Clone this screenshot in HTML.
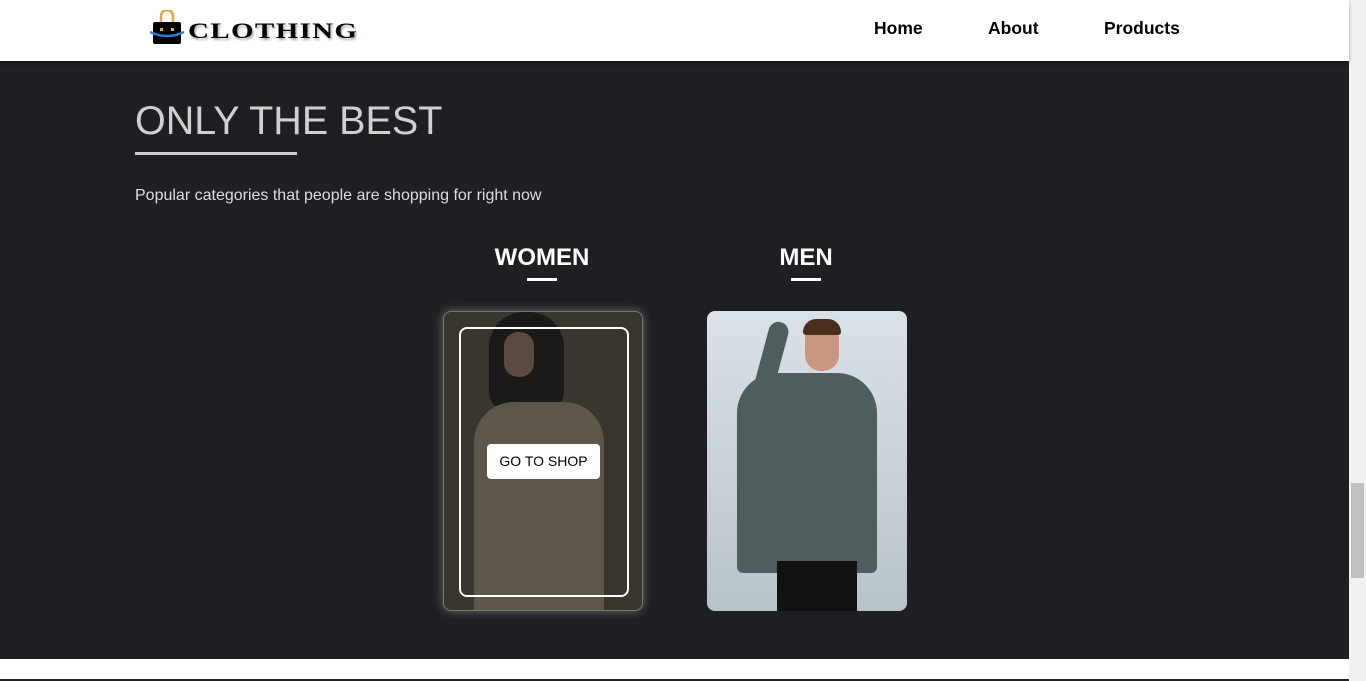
<!DOCTYPE html>
<html><head><meta charset="utf-8"><style>
*{margin:0;padding:0;box-sizing:border-box}
body{width:1366px;height:681px;overflow:hidden;background:#fff;font-family:"Liberation Sans",sans-serif;position:relative}
.nav{position:absolute;left:0;top:0;width:1349px;height:61px;background:#fff;box-shadow:0 2px 4px rgba(0,0,0,.3);z-index:2}
.nav a{position:absolute;top:18px;font-weight:bold;font-size:17.5px;color:#000;text-decoration:none}
.main{position:absolute;left:0;top:61px;width:1349px;height:598px;background:#1e1f23}
h1{position:absolute;left:135px;top:38px;font-weight:normal;font-size:39.5px;color:#d0d0d0}
.ul{position:absolute;left:135px;top:91px;width:162px;height:3px;background:#d0d0d0}
.sub{position:absolute;left:135px;top:126px;color:#ddd;font-size:16px}
.cat{position:absolute;top:183px;color:#fff;font-weight:bold;font-size:24px;text-align:center;width:200px}
.cat i{display:block;width:30px;height:3px;background:#fff;margin:6px auto 0}
.card{position:absolute;top:250px;width:200px;height:300px;border-radius:8px;overflow:hidden}
.sb{position:absolute;right:0;top:0;width:17px;height:681px;background:#f1f1f1}
</style></head><body>
<div class="nav">
 <svg style="position:absolute;left:150px;top:10px" width="34" height="36" viewBox="0 0 34 36"><path d="M11 12V6a6 6 0 0 1 12 0v6" fill="none" stroke="#e8a33a" stroke-width="2.5"/><rect x="3" y="12" width="28" height="22" rx="2" fill="#000"/><path d="M0 22q17 8 34 0" stroke="#2a7bd4" stroke-width="2.5" fill="none"/><rect x="10" y="18" width="3" height="3" fill="#e8a33a"/><rect x="21" y="18" width="3" height="3" fill="#e8a33a"/></svg>
 <div style="position:absolute;left:188px;top:18px;font-family:'Liberation Serif',serif;font-weight:900;font-size:22px;letter-spacing:1px;color:#000;text-shadow:1px 2px 2px #aa9;transform:scaleX(1.32);transform-origin:left">CLOTHING</div>
 <a style="left:874px">Home</a><a style="left:988px">About</a><a style="left:1104px">Products</a>
</div>
<div class="main">
 <h1>ONLY THE BEST</h1><div class="ul"></div>
 <div class="sub">Popular categories that people are shopping for right now</div>
 <div class="cat" style="left:442px">WOMEN<i></i></div>
 <div class="cat" style="left:706px">MEN<i></i></div>
 <div class="card" style="left:443px;background:#38362f;box-shadow:0 0 10px rgba(255,255,255,.35);border:1px solid #777">
  <div style="position:absolute;left:45px;top:0;width:75px;height:100px;background:#1c1a18;border-radius:35px 35px 20px 20px"></div>
  <div style="position:absolute;left:60px;top:20px;width:30px;height:45px;background:#5a4a40;border-radius:14px"></div>
  <div style="position:absolute;left:30px;top:90px;width:130px;height:210px;background:#5c564b;border-radius:40px 40px 0 0"></div>
  <div style="position:absolute;left:15px;top:15px;width:170px;height:270px;border:2px solid #fff;border-radius:8px"></div>
  <div style="position:absolute;left:43px;top:132px;width:113px;height:35px;background:#fff;border-radius:4px;font-size:14px;text-align:center;line-height:35px;color:#000">GO TO SHOP</div>
 </div>
 <div class="card" style="left:707px;background:linear-gradient(#dbe2e7,#b8c3c9)">
  <div style="position:absolute;left:98px;top:12px;width:34px;height:48px;background:#c9977e;border-radius:16px"></div>
  <div style="position:absolute;left:96px;top:8px;width:38px;height:16px;background:#4a2e20;border-radius:18px 18px 4px 4px"></div>
  <div style="position:absolute;left:30px;top:62px;width:140px;height:200px;background:#4e5d5d;border-radius:40px 40px 6px 6px"></div>
  <div style="position:absolute;left:55px;top:10px;width:20px;height:70px;background:#4e5d5d;border-radius:10px;transform:rotate(15deg)"></div>
  <div style="position:absolute;left:70px;top:250px;width:80px;height:50px;background:#111"></div>
 </div>
</div>
<div class="sb"><div style="position:absolute;left:2px;top:483px;width:13px;height:95px;background:#c1c1c1"></div></div>
<div style="position:absolute;left:0;top:679px;width:1349px;height:2px;background:#222"></div>
</body></html>
